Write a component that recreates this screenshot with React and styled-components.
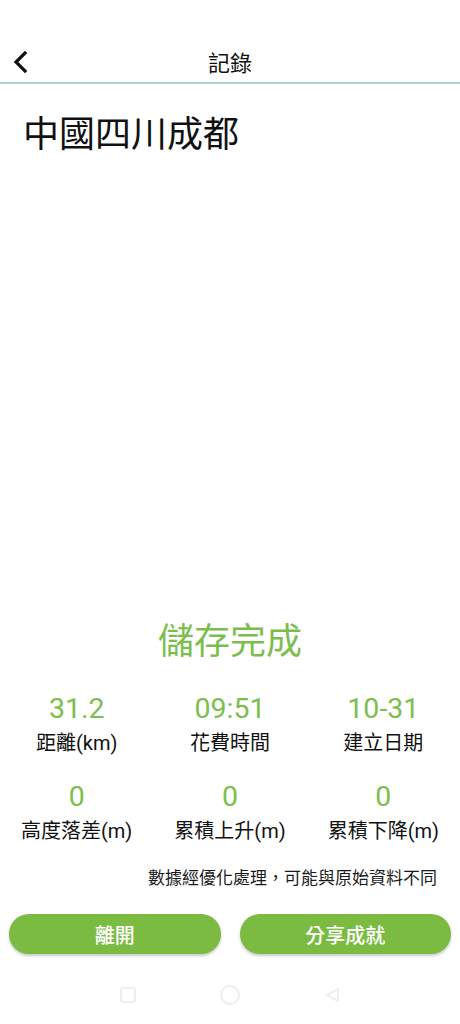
import React from 'react';
import styled, { createGlobalStyle } from 'styled-components';

const GlobalStyle = createGlobalStyle`
  html, body {
    margin: 0;
    padding: 0;
    background: #ffffff;
  }
  body {
    font-family: Roboto, 'Noto Sans CJK TC', sans-serif;
    color: #111111;
  }
`;

const stats = [
  { value: '31.2', label: '距離(km)' },
  { value: '09:51', label: '花費時間' },
  { value: '10-31', label: '建立日期' },
  { value: '0', label: '高度落差(m)' },
  { value: '0', label: '累積上升(m)' },
  { value: '0', label: '累積下降(m)' },
];

const BackIcon = () => (
  <svg width="18" height="24" viewBox="0 0 18 24" fill="none">
    <path d="M13 3 L4 12 L13 21" stroke="#111" strokeWidth="3.2" strokeLinecap="square" />
  </svg>
);

const App = () => {
  return (
    <Page>
      <GlobalStyle />
      <Header>
        <BackButton>
          <BackIcon />
        </BackButton>
        <HeaderTitle>記錄</HeaderTitle>
      </Header>
      <Place>中國四川成都</Place>
      <Spacer />
      <Result>
        <Done>儲存完成</Done>
        <StatGrid>
          {stats.map((s, i) => (
            <Stat key={i} $top={i >= 3}>
              <StatValue>{s.value}</StatValue>
              <StatLabel>{s.label}</StatLabel>
            </Stat>
          ))}
        </StatGrid>
        <Note>數據經優化處理，可能與原始資料不同</Note>
        <Buttons>
          <PillButton>離開</PillButton>
          <PillButton>分享成就</PillButton>
        </Buttons>
      </Result>
      <NavBar>
        <NavSquare />
        <NavCircle />
        <svg width="16" height="16" viewBox="0 0 16 16">
          <path d="M14 2 L14 14 L3 8 Z" fill="none" stroke="#eeeeee" strokeWidth="2" />
        </svg>
      </NavBar>
    </Page>
  );
};

export default App;

const Page = styled.div`
  width: 460px;
  height: 1024px;
  display: flex;
  flex-direction: column;
  padding-top: 40px;
  box-sizing: border-box;
  overflow: hidden;
`;

const Header = styled.header`
  position: relative;
  height: 42px;
  display: flex;
  align-items: center;
  justify-content: center;
  border-bottom: 2px solid #a3d3c9;
`;

const BackButton = styled.div`
  position: absolute;
  left: 12px;
  top: 10px;
  display: flex;
`;

const HeaderTitle = styled.h1`
  margin: 0;
  font-family: 'Noto Sans CJK TC', sans-serif;
  font-weight: 400;
  font-size: 22px;
  color: #111111;
`;

const Place = styled.h2`
  margin: 25px 0 0 23px;
  font-family: 'Noto Sans CJK TC', sans-serif;
  font-weight: 400;
  font-size: 36px;
  line-height: 44px;
  color: #111111;
`;

const Spacer = styled.div`
  flex: 1;
`;

const Result = styled.section`
  display: flex;
  flex-direction: column;
`;

const Done = styled.div`
  text-align: center;
  font-family: 'Noto Sans CJK TC', sans-serif;
  font-size: 36px;
  line-height: 44px;
  color: #7cbe4e;
`;

const StatGrid = styled.div`
  margin-top: 33px;
  display: grid;
  grid-template-columns: repeat(3, 1fr);
`;

const Stat = styled.div`
  display: flex;
  flex-direction: column;
  align-items: center;
  margin-top: ${(p) => (p.$top ? '25px' : '0')};
`;

const StatValue = styled.div`
  font-family: Roboto, 'Noto Sans CJK TC', sans-serif;
  font-size: 28.5px;
  line-height: 32px;
  color: #7cbe4e;
`;

const StatLabel = styled.div`
  margin-top: 5px;
  font-size: 20px;
  line-height: 26px;
  color: #111111;
`;

const Note = styled.div`
  margin-top: 21px;
  padding-right: 23px;
  text-align: right;
  font-family: 'Noto Sans CJK TC', sans-serif;
  font-size: 17px;
  line-height: 24px;
  color: #1a1a1a;
`;

const Buttons = styled.div`
  margin-top: 25px;
  display: flex;
  gap: 19px;
  padding: 0 9px;
`;

const PillButton = styled.button`
  flex: 1;
  height: 40px;
  border: none;
  border-radius: 20px;
  background: #7bbb41;
  color: #ffffff;
  font-family: 'Noto Sans CJK TC', sans-serif;
  font-size: 20px;
  font-weight: 500;
  box-shadow: 0 2px 3px rgba(0, 0, 0, 0.22);
  padding: 0;
`;

const NavBar = styled.nav`
  height: 70px;
  box-sizing: border-box;
  padding-top: 12px;
  display: flex;
  align-items: center;
  justify-content: center;
  gap: 84px;
`;

const NavSquare = styled.div`
  width: 12px;
  height: 12px;
  border: 2px solid #eeeeee;
  border-radius: 2px;
`;

const NavCircle = styled.div`
  width: 16px;
  height: 16px;
  border: 2px solid #eeeeee;
  border-radius: 50%;
`;
